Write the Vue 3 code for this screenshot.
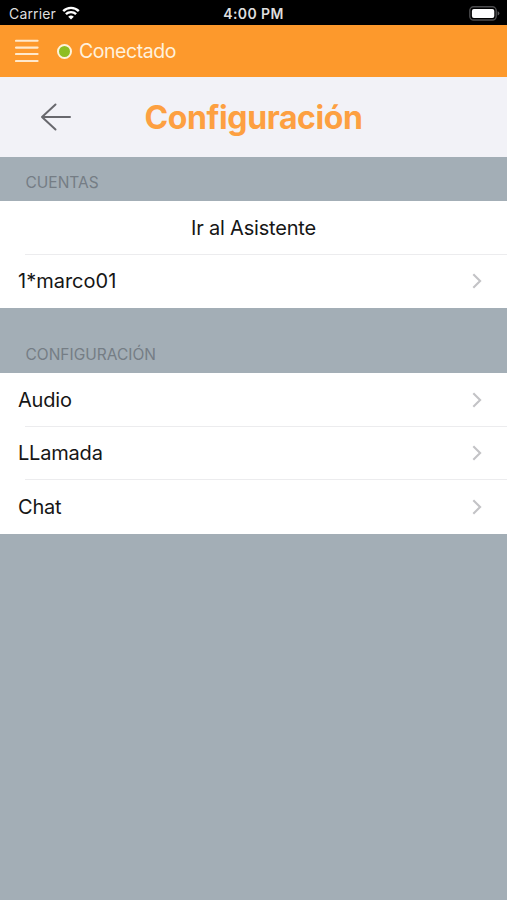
<script setup>
const groups = [
  {
    title: 'CUENTAS',
    kind: 'accounts',
    rows: [
      { label: 'Ir al Asistente', id: 'wizard', action: true },
      { label: '1*marco01', id: 'account' },
    ],
  },
  {
    title: 'CONFIGURACIÓN',
    kind: 'settings',
    rows: [
      { label: 'Audio', id: 'audio' },
      { label: 'LLamada', id: 'call' },
      { label: 'Chat', id: 'chat' },
    ],
  },
]
</script>

<template>
  <div class="screen">
    <div class="status">
      <div class="carrier">
        <span class="carrier-name">Carrier</span>
        <svg class="wifi" width="18" height="14" viewBox="0 0 18 14">
          <path d="M1.2 5.1a11 11 0 0 1 15.6 0" />
          <path d="M3.9 8.2a7.2 7.2 0 0 1 10.2 0" />
          <path class="dot" d="M6.2 10.8a4 4 0 0 1 5.6 0L9 13.6z" />
        </svg>
      </div>
      <span class="clock">4:00 PM</span>
      <svg class="battery" width="31" height="15" viewBox="0 0 31 15">
        <rect class="shell" x="0.8" y="0.8" width="26.4" height="13.2" rx="3.8" />
        <rect class="charge" x="2.9" y="2.9" width="22.4" height="9" rx="2" />
        <path class="cap" d="M28.6 5.2q1.8.6 1.8 2.2t-1.8 2.2z" />
      </svg>
    </div>

    <header class="toolbar">
      <svg class="menu" width="24" height="24" viewBox="0 0 24 24">
        <path d="M1 1.8h21.6M1 8.6h21.6M1 15h21.6M1 22h21.6" />
      </svg>
      <span class="presence"></span>
      <span class="state">Conectado</span>
    </header>

    <div class="titlebar">
      <svg class="back" width="32" height="30" viewBox="0 0 32 30">
        <path d="M30 15H2M15.5 2.5L2 15l13.5 12.5" />
      </svg>
      <h1 class="title">Configuración</h1>
    </div>

    <section v-for="g in groups" :key="g.title" class="group" :class="g.kind">
      <h2 class="heading">{{ g.title }}</h2>
      <ul class="list">
        <li v-for="r in g.rows" :key="r.id" class="row" :class="{ action: r.action }">
          <span class="label" :class="r.id">{{ r.label }}</span>
          <svg v-if="!r.action" class="chevron" width="10" height="16" viewBox="0 0 10 16">
            <path d="M1.3 1.3L8.1 8l-6.8 6.7" />
          </svg>
        </li>
      </ul>
    </section>
  </div>
</template>

<style>
body {
  margin: 0;
  background: #a3aeb6;
}
</style>

<style scoped>
.screen {
  width: 507px;
  height: 900px;
  overflow: hidden;
  background: #a3aeb6;
  font-family: Inter, "Liberation Sans", sans-serif;
  color: #161616;
}
.status {
  box-sizing: border-box;
  height: 25px;
  padding: 2px 7px 0 9px;
  display: grid;
  grid-template-columns: 1fr auto 1fr;
  align-items: center;
  background: #000;
  color: #dedede;
}
.carrier {
  display: flex;
  align-items: center;
  gap: 6px;
}
.carrier-name {
  font-size: 14px;
  letter-spacing: 0.15px;
}
.wifi {
  fill: none;
  stroke: #fff;
  stroke-width: 2.4;
  margin-top: -2px;
}
.wifi .dot {
  fill: #fff;
  stroke: none;
}
.clock {
  margin-right: 2px;
  font-size: 14px;
  font-weight: 600;
  letter-spacing: 0.4px;
}
.battery {
  justify-self: end;
  margin-top: -1px;
}
.shell {
  fill: none;
  stroke: #4c4c4e;
  stroke-width: 1.4;
}
.charge {
  fill: #fff;
}
.cap {
  fill: #5a5a5c;
}
.toolbar {
  height: 52px;
  padding-left: 15px;
  display: flex;
  align-items: center;
  background: #fd992c;
}
.menu {
  fill: none;
  stroke: #ffe9cc;
  stroke-width: 2.1;
  stroke-linecap: round;
}
.presence {
  box-sizing: border-box;
  width: 15px;
  height: 15px;
  margin: 0 7px 0 18px;
  border: 2.5px solid #fff3da;
  border-radius: 50%;
  background: #8fbe22;
}
.state {
  font-size: 19.5px;
  letter-spacing: -0.45px;
  color: #fff1dd;
}
.titlebar {
  height: 80px;
  display: grid;
  grid-template-columns: 1fr auto 1fr;
  align-items: center;
  background: #f2f2f7;
}
.back {
  margin-left: 40px;
  fill: none;
  stroke: #68686d;
  stroke-width: 2;
  stroke-linecap: round;
  stroke-linejoin: round;
}
.title {
  margin: 2px 0 0;
  font-size: 32px;
  font-weight: 700;
  line-height: 40px;
  letter-spacing: -0.4px;
  color: #fda041;
}
.heading {
  box-sizing: border-box;
  height: 44px;
  margin: 0;
  padding: 16px 0 0 25.5px;
  font-size: 15.5px;
  font-weight: 400;
  line-height: 20px;
  letter-spacing: 0;
  color: #757d85;
}
.settings .heading {
  height: 65px;
  padding-top: 37px;
}
.list {
  margin: 0;
  padding: 0;
  list-style: none;
  background: #fff;
}
.row {
  box-sizing: border-box;
  height: 53.5px;
  padding: 0 25px 0 18px;
  display: flex;
  align-items: center;
  justify-content: space-between;
  background: linear-gradient(#ececee, #ececee) 25px 100% / 100% 1px no-repeat;
}
.row:last-child {
  background: none;
}
.row.action {
  justify-content: center;
  padding: 0;
}
.label {
  font-size: 20px;
  line-height: 26px;
  letter-spacing: -0.2px;
}
.account {
  letter-spacing: 0;
}
.chevron {
  fill: none;
  stroke: #c3c3c6;
  stroke-width: 2.1;
}
</style>
